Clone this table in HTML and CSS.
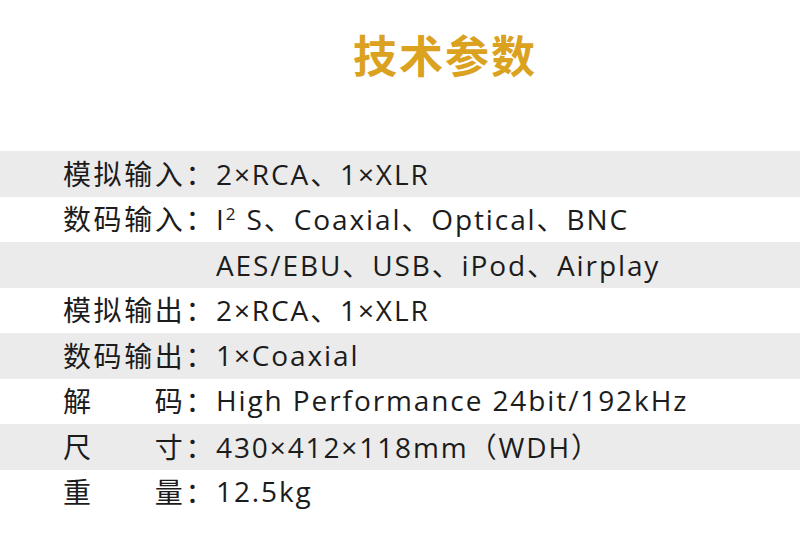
FILE: index.html
```html
<!DOCTYPE html>
<html lang="zh-CN">
<head>
<meta charset="utf-8">
<title>技术参数</title>
<link rel="stylesheet" href="styles.css">
</head>
<body>
<div class="page">
  <header class="head"><h1 class="title">技术参数</h1></header>
  <section class="specs">
    <div class="row shade"><span class="label">模拟输入：</span><span class="value">2×RCA、1×XLR</span></div>
    <div class="row"><span class="label">数码输入：</span><span class="value">I<sup class="sup">2</sup> S、Coaxial、Optical、BNC</span></div>
    <div class="row shade"><span class="label"></span><span class="value">AES/EBU、USB、iPod、Airplay</span></div>
    <div class="row"><span class="label">模拟输出：</span><span class="value">2×RCA、1×XLR</span></div>
    <div class="row shade"><span class="label">数码输出：</span><span class="value">1×Coaxial</span></div>
    <div class="row"><span class="label">解　　码：</span><span class="value">High Performance 24bit/192kHz</span></div>
    <div class="row shade"><span class="label">尺　　寸：</span><span class="value">430×412×118mm（WDH）</span></div>
    <div class="row"><span class="label">重　　量：</span><span class="value">12.5kg</span></div>
  </section>
</div>
</body>
</html>
```
FILE: styles.css
```css
html, body {
  margin: 0;
  padding: 0;
  background: #ffffff;
}
.page {
  width: 800px;
  height: 545px;
  overflow: hidden;
  font-family: "Open Sans", "Noto Sans CJK SC", sans-serif;
  color: #1c1c1c;
}
.head {
  height: 151px;
  display: flex;
  justify-content: center;
  padding-left: 90px;
  box-sizing: border-box;
}
.title {
  margin: 26px 0 0;
  font-family: "Noto Sans CJK SC", sans-serif;
  font-size: 44px;
  font-weight: 700;
  letter-spacing: 2px;
  line-height: 56px;
  color: #dba21f;
}
.specs {
  display: flex;
  flex-direction: column;
}
.row {
  height: 45.5px;
  display: flex;
  align-items: center;
  padding-left: 63px;
  font-size: 28px;
  letter-spacing: 1.9px;
  white-space: nowrap;
}
.row > span {
  position: relative;
  top: -1px;
}
.shade {
  background: #ebebeb;
}
.label {
  width: 153px;
  flex: none;
  font-family: "Noto Sans CJK SC", sans-serif;
  letter-spacing: 2.6px;
}
.value {
  flex: none;
}
.sup {
  font-size: 17px;
  vertical-align: 10px;
  line-height: 0;
}
```
